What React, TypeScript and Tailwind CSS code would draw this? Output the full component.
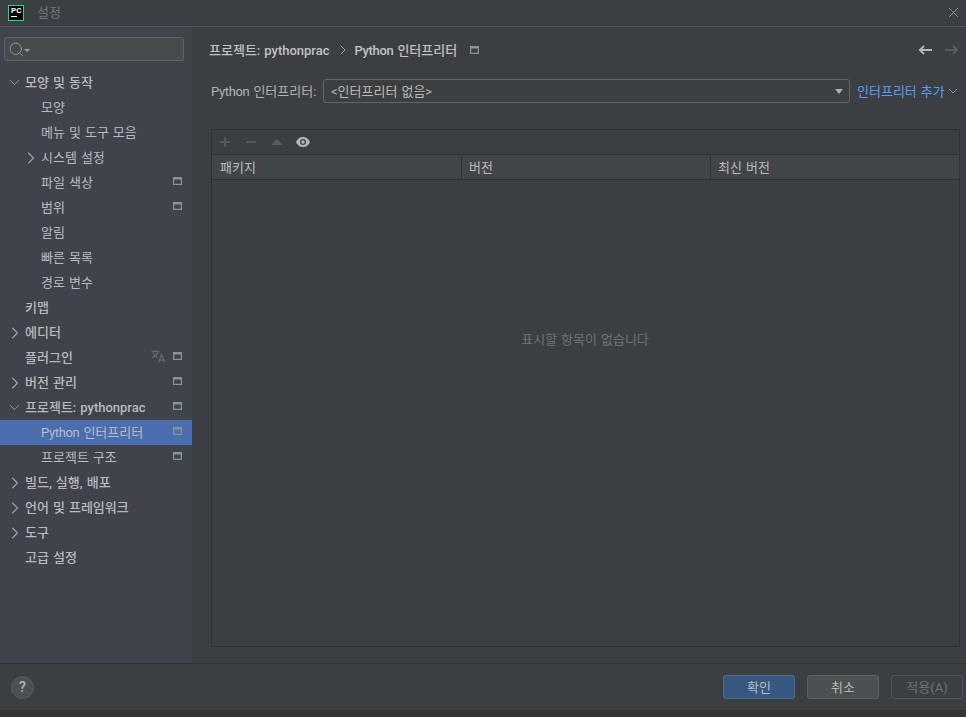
import type { ReactNode } from 'react';
import { ChevronDown, ChevronRight, X, Search } from 'lucide-react';

interface TreeRow {
  label: ReactNode;
  indent: 0 | 1;
  arrow?: 'open' | 'closed';
  pinned?: boolean;
  translate?: boolean;
  selected?: boolean;
  bold?: boolean;
}

// "Python" runs narrower in the reference than Roboto sets it
const Python = () => <span className="tracking-[-0.35px]">Python</span>;

const rows: TreeRow[] = [
  { label: '모양 및 동작', indent: 0, arrow: 'open', bold: true },
  { label: '모양', indent: 1 },
  { label: '메뉴 및 도구 모음', indent: 1 },
  { label: '시스템 설정', indent: 1, arrow: 'closed' },
  { label: '파일 색상', indent: 1, pinned: true },
  { label: '범위', indent: 1, pinned: true },
  { label: '알림', indent: 1 },
  { label: '빠른 목록', indent: 1 },
  { label: '경로 변수', indent: 1 },
  { label: '키맵', indent: 0, bold: true },
  { label: '에디터', indent: 0, arrow: 'closed', bold: true },
  { label: '플러그인', indent: 0, pinned: true, translate: true, bold: true },
  { label: '버전 관리', indent: 0, arrow: 'closed', pinned: true, bold: true },
  { label: '프로젝트: pythonprac', indent: 0, arrow: 'open', pinned: true, bold: true },
  { label: <><Python /> 인터프리터</>, indent: 1, pinned: true, selected: true },
  { label: '프로젝트 구조', indent: 1, pinned: true },
  { label: '빌드, 실행, 배포', indent: 0, arrow: 'closed', bold: true },
  { label: '언어 및 프레임워크', indent: 0, arrow: 'closed', bold: true },
  { label: '도구', indent: 0, arrow: 'closed', bold: true },
  { label: '고급 설정', indent: 0, bold: true },
];

function PinIcon({ inner = '#3e434c', className }: { inner?: string; className?: string }) {
  return (
    <svg width="9" height="8" viewBox="0 0 9 8" className={className}>
      <rect width="9" height="8" fill="#8a929c" />
      <rect x="1.25" y="2.5" width="6.5" height="4.25" fill={inner} />
    </svg>
  );
}

function TranslateIcon() {
  return (
    <svg width="15" height="14" viewBox="0 0 15 14" fill="none" stroke="#64686c" strokeWidth="1.3" className="mb-[3px]">
      <path d="M0.5 2.5h8M4.5 0.5v2M7 2.5c-.6 3-2.8 5.2-6 6.5M2 4c.8 2 2.3 3.4 4.3 4.3" />
      <path d="M7.5 13.5l3-8 3.5 8M8.7 11h4.2" />
    </svg>
  );
}

function Tree() {
  return (
    <div className="flex flex-col">
      {rows.map((row, i) => (
        <div
          key={i}
          className={`flex h-[25px] shrink-0 items-center pr-[10px] ${row.selected ? 'bg-[#4b6eaf]' : ''} ${row.indent === 1 ? 'pl-[20px]' : 'pl-[4px]'}`}
        >
          <span className="flex w-[21px] shrink-0 items-center justify-center text-[#9ea3a9]">
            {row.arrow === 'open' && <ChevronDown size={17} strokeWidth={1.3} />}
            {row.arrow === 'closed' && <ChevronRight size={20} strokeWidth={1.3} />}
          </span>
          <span className={`flex-1 ${row.bold ? 'font-medium' : ''} ${row.selected ? 'text-[#b5bdc9]' : 'text-[#bbbbbb]'}`}>
            {row.label}
          </span>
          {row.translate && (
            <span className="mr-[7px]">
              <TranslateIcon />
            </span>
          )}
          {row.pinned && <PinIcon className="mb-[3px]" inner={row.selected ? '#4b6eaf' : '#3e434c'} />}
        </div>
      ))}
    </div>
  );
}

export default function App() {
  return (
    <div className="flex h-[717px] w-[966px] flex-col overflow-hidden bg-[#3c3f41] font-['Roboto','Noto_Sans_CJK_KR',sans-serif] text-[13px] text-[#bbbbbb] [word-spacing:0.8px]">
      {/* title bar */}
      <div className="flex h-[27px] shrink-0 items-center border-b border-[#515354] pl-2 pr-[4px]">
        <div className="mb-[1px] flex h-4 w-4 flex-col border border-[#21d789] bg-black px-[2px] pt-[1px] text-[8px] font-bold leading-[7px] text-white">
          PC
          <div className="mt-[2px] h-px w-[6px] bg-white" />
        </div>
        <span className="mb-[1px] ml-[13px] text-[#73777a]">설정</span>
        <X size={17} strokeWidth={1.2} className="mb-[2px] ml-auto text-[#9a9da0]" />
      </div>

      <div className="flex min-h-0 flex-1">
        {/* sidebar */}
        <div className="flex w-[192px] shrink-0 flex-col bg-[#3e434c] pt-[10px]">
          <div className="ml-1 mr-2 flex h-[24px] items-center rounded-[3px] border border-[#5f6364] bg-[#484b4c] pl-[3px]">
            <Search size={17} strokeWidth={1.1} className="text-[#a0a3a6]" />
            <span className="-ml-[1px] mt-[2px] h-0 w-0 border-x-[3px] border-t-[3px] border-x-transparent border-t-[#a0a3a6]" />
          </div>
          <div className="mt-[9px]">
            <Tree />
          </div>
        </div>

        {/* main panel */}
        <div className="flex min-w-0 flex-1 flex-col pl-[17px] pr-[4px]">
          <div className="mt-[14px] flex h-[18px] items-center pr-[3px]">
            <span className="pt-[1px] font-medium text-[#c0c2c4]">프로젝트: pythonprac</span>
            <ChevronRight size={16} strokeWidth={1.2} className="ml-[5px] mr-[4px] text-[#bbbbbb]" />
            <span className="pt-[1px] font-medium text-[#c0c2c4]"><Python /> 인터프리터</span>
            <PinIcon inner="#3c3f41" className="ml-[13px]" />
            <svg width="14" height="10" viewBox="0 0 14 10" fill="none" stroke="#b4b6b8" strokeWidth="2" className="ml-auto mr-[13px]">
              <path d="M14 5H2M6 1L2 5l4 4" />
            </svg>
            <svg width="14" height="10" viewBox="0 0 14 10" fill="none" stroke="#595c5e" strokeWidth="2">
              <path d="M0 5h12M8 1l4 4-4 4" />
            </svg>
          </div>

          <div className="mt-[20px] flex h-[24px] items-center pl-[2px]">
            <span className="w-[112px] shrink-0 pt-[1px] text-[#aeb3b8]"><Python /> 인터프리터:</span>
            <div className="relative flex h-[24px] w-[527px] items-center rounded-[3px] border border-[#646464] pl-[7px]">
              <span className="pt-[1px] text-[#bbbbbb]">&lt;인터프리터 없음&gt;</span>
              <span className="absolute right-[6px] top-[9px] h-0 w-0 border-x-[4px] border-t-[5px] border-x-transparent border-t-[#aeb0b2]" />
            </div>
            <span className="ml-[7px] pt-[1px] text-[#589df6]">인터프리터 추가</span>
            <ChevronDown size={16} strokeWidth={1.5} className="text-[#8e9194]" />
          </div>

          <div className="ml-[2px] mt-[26px] flex h-[518px] w-[749px] flex-col border border-[#323232]">
            <div className="flex h-[25px] shrink-0 items-center border-b border-[#323232] pl-[8px]">
              <svg width="10" height="10" viewBox="0 0 10 10" fill="#55585a">
                <path d="M4 0h2v4h4v2H6v4H4V6H0V4h4z" />
              </svg>
              <svg width="10" height="2" viewBox="0 0 10 2" fill="#55585a" className="ml-[16px]">
                <rect width="10" height="2" />
              </svg>
              <span className="ml-[15px] h-0 w-0 border-x-[6px] border-b-[6px] border-x-transparent border-b-[#595c5e]" />
              <svg width="14" height="10" viewBox="0 0 14 10" className="ml-[13px]">
                <path d="M7 0C3.8 0 1.2 2 0 5c1.2 3 3.8 5 7 5s5.800-2 7-5c-1.200-3-3.800-5-7-5z" fill="#b4b7b9" />
                <circle cx="7" cy="5" r="3" fill="#3c3f41" />
                <circle cx="7" cy="5" r="1.700" fill="#b4b7b9" />
              </svg>
            </div>
            <div className="grid h-[25px] shrink-0 grid-cols-[249px_249px_1fr] items-center border-b border-[#323232] bg-[#424547]">
              <span className="pl-[8px] pt-[1px]">패키지</span>
              <span className="border-l border-[#323232] pl-[7px] pt-[1px] leading-[22px]">버전</span>
              <span className="border-l border-[#323232] pl-[7px] pt-[1px] leading-[22px]">최신 버전</span>
            </div>
            <div className="flex flex-1 items-center justify-center pb-[147px] pr-[1px] text-[#6f7274]">
              표시할 항목이 없습니다
            </div>
          </div>
        </div>
      </div>

      {/* footer */}
      <div className="flex h-[48px] shrink-0 items-center border-y border-[#323232] pl-[11px] pr-[3px]">
        <div className="flex h-[23px] w-[23px] items-center justify-center rounded-full border border-[#5a5d5f] bg-[#4c5052] text-[14px] font-medium text-[#bbbbbb]">
          ?
        </div>
        <button className="ml-auto h-[24px] w-[72px] rounded-[3px] border border-[#4c708c] bg-[#365880] pt-[1px] text-[#bbbbbb]">확인</button>
        <button className="ml-[12px] h-[24px] w-[72px] rounded-[3px] border border-[#5e6060] bg-[#4c5052] pt-[1px] text-[#bbbbbb]">취소</button>
        <button className="ml-[12px] h-[24px] w-[72px] rounded-[3px] border border-[#54575a] pt-[1px] text-[#6f7274]">적용(A)</button>
      </div>
      <div className="h-[6px] shrink-0 bg-[#323436]" />
    </div>
  );
}
